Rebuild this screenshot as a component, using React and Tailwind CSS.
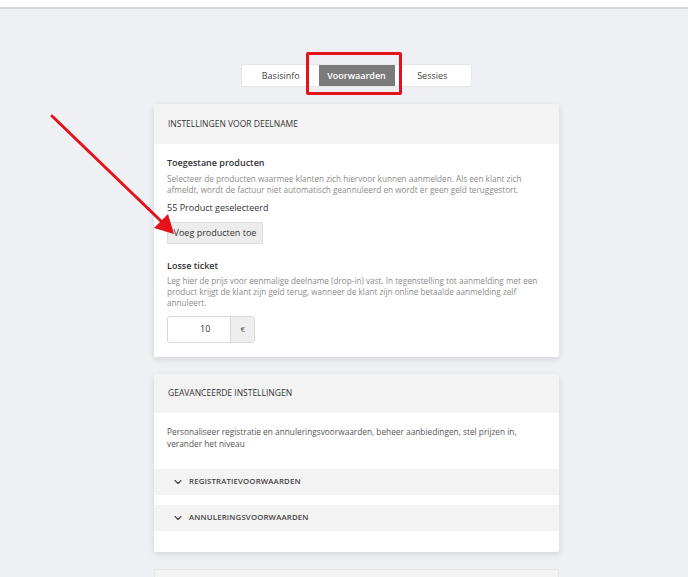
import React from 'react'
import { ChevronDown } from 'lucide-react'

const font = { fontFamily: '"Open Sans", "Liberation Sans", sans-serif' }

function Accordion({ label }) {
  return (
    <div className="flex h-[26px] items-center gap-[5px] bg-[#f3f3f3] px-[18px]">
      <ChevronDown className="h-[12px] w-[12px] text-[#444]" strokeWidth={2.2} />
      <span className="text-[7.8px] font-semibold uppercase tracking-[0.02em] text-[#444]">{label}</span>
    </div>
  )
}

export default function App() {
  return (
    <div className="relative h-[577px] overflow-hidden bg-[#eef0f4]" style={font}>
      <div className="h-[9px] border-b-2 border-[#d6d7da] bg-white" />

      {/* tabs */}
      <div className="ml-[241px] mt-[55px] flex h-[23px] w-[231px] items-center rounded-[3px] border border-[#e4e6ea] bg-white px-[1px] text-[9px] text-[#444]">
        <div className="flex-1 text-center">Basisinfo</div>
        <div className="relative flex h-[21px] w-[76px] items-center justify-center bg-[#7a7a7a] font-semibold text-white">
          Voorwaarden
          <div className="absolute -left-[13px] -top-[13px] h-[43px] w-[96px] rounded-[2px] border-[3px] border-[#e3121b]" />
        </div>
        <div className="flex-1 text-center">Sessies</div>
      </div>

      {/* card 1 */}
      <div className="ml-[154px] mt-[17px] w-[405px] rounded-[2px] bg-white shadow-[0_2px_6px_rgba(0,0,0,0.12)]">
        <div className="flex h-[40px] items-center bg-[#f3f3f3] px-[14px] text-[8.5px] uppercase text-[#333]">
          Instellingen voor deelname
        </div>
        <div className="px-[13px] pb-[14px] pt-[12px]">
          <div className="text-[9px] font-semibold text-[#333]">Toegestane producten</div>
          <p className="mt-[3px] text-[8.2px] leading-[11px] text-[#8c8c8c]">
            Selecteer de producten waarmee klanten zich hiervoor kunnen aanmelden. Als een klant zich afmeldt, wordt de factuur niet automatisch geannuleerd en wordt er geen geld teruggestort.
          </p>
          <div className="mt-[6px] text-[9px] text-[#333]">55 Product geselecteerd</div>
          <button className="mt-[8px] h-[22px] w-[96px] border border-[#dedede] bg-[#ececec] text-[9px] text-[#333]">
            Voeg producten toe
          </button>
          <div className="mt-[15px] text-[9px] font-semibold text-[#333]">Losse ticket</div>
          <p className="mt-[2px] text-[8.2px] leading-[11px] text-[#8c8c8c]">
            Leg hier de prijs voor eenmalige deelname (drop-in) vast. In tegenstelling tot aanmelding met een product krijgt de klant zijn geld terug, wanneer de klant zijn online betaalde aanmelding zelf annuleert.
          </p>
          <div className="mt-[8px] flex h-[27px] w-[88px] rounded-[3px] border border-[#d9d9d9]">
            <div className="flex w-[63px] items-center justify-end pr-[20px] text-[9px] text-[#333]">10</div>
            <div className="flex w-[24px] items-center justify-center border-l border-[#d9d9d9] bg-[#eeeeee] text-[8px] text-[#555]">€</div>
          </div>
        </div>
      </div>

      {/* card 2 */}
      <div className="ml-[154px] mt-[17px] w-[405px] rounded-[2px] bg-white pb-[21px] shadow-[0_2px_6px_rgba(0,0,0,0.12)]">
        <div className="flex h-[39px] items-center bg-[#f3f3f3] px-[14px] text-[8.5px] uppercase text-[#333]">
          Geavanceerde instellingen
        </div>
        <p className="px-[13px] pt-[13px] text-[8.3px] leading-[12px] text-[#555]">
          Personaliseer registratie en annuleringsvoorwaarden, beheer aanbiedingen, stel prijzen in, verander het niveau
        </p>
        <div className="mt-[19px] flex flex-col gap-[10px]">
          <Accordion label="Registratievoorwaarden" />
          <Accordion label="Annuleringsvoorwaarden" />
        </div>
      </div>

      {/* card 3 (partial) */}
      <div className="ml-[154px] mt-[17px] h-[40px] w-[405px] rounded-[2px] border border-[#e6e6e6] bg-[#f3f3f3]" />

      {/* annotation arrow */}
      <svg className="pointer-events-none absolute left-0 top-0" width="688" height="577">
        <line x1="52" y1="116" x2="162" y2="222" stroke="#e3121b" strokeWidth="3" strokeLinecap="round" />
        <polygon points="174,234 154,228 168,214" fill="#e3121b" />
      </svg>
    </div>
  )
}
